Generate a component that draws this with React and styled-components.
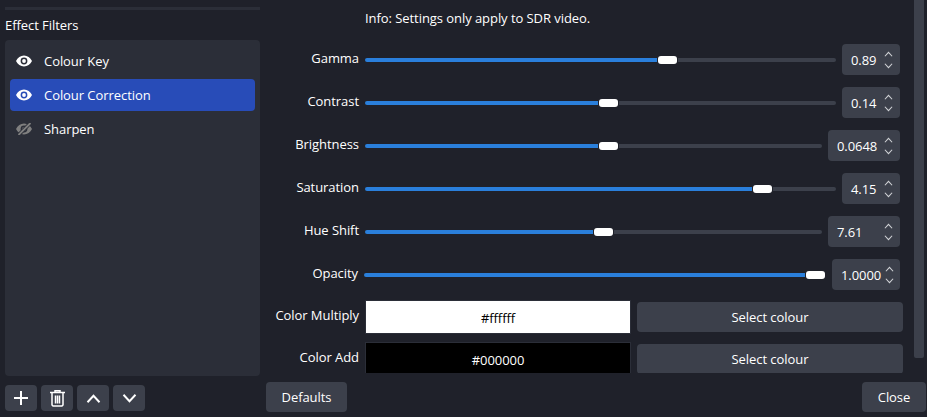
import styled, { createGlobalStyle } from 'styled-components';

const GlobalStyle = createGlobalStyle`
  html, body { margin: 0; padding: 0; background: #1f212a; }
  * { box-sizing: border-box; }
`;

const Page = styled.div`
  width: 927px;
  height: 417px;
  display: flex;
  overflow: hidden;
  background: #1f212a;
  color: #fff;
  font-family: "Open Sans", "Liberation Sans", sans-serif;
  font-size: 13px;
  letter-spacing: -0.06px;
`;

const LeftColumn = styled.div`
  width: 255px;
  margin-left: 5px;
  display: flex;
  flex-direction: column;
`;

const TopRule = styled.div`
  height: 3px;
  margin-top: 7px;
  background: #2b2e38;
`;

const GroupTitle = styled.div`
  height: 30px;
  line-height: 30px;
`;

const FilterList = styled.div`
  height: 336px;
  background: #2b2e38;
  border-radius: 4px;
  padding: 5px;
  display: flex;
  flex-direction: column;
  gap: 2px;
`;

const FilterRow = styled.div`
  height: 32px;
  display: flex;
  align-items: center;
  gap: 12px;
  padding-left: 6px;
  border-radius: 4px;
  background: ${p => (p.$selected ? '#284cb8' : 'transparent')};
`;

const ToolRow = styled.div`
  display: flex;
  gap: 4px;
  margin-top: 9px;
`;

const ToolButton = styled.div`
  width: 32px;
  height: 26px;
  border-radius: 4px;
  background: #3c404b;
  display: flex;
  align-items: center;
  justify-content: center;
`;

const RightColumn = styled.div`
  width: 660px;
  margin-left: 6px;
  display: flex;
  flex-direction: column;
`;

const ScrollArea = styled.div`
  height: 373px;
  flex-shrink: 0;
  overflow: hidden;
  display: flex;
`;

const Form = styled.div`
  width: 637px;
  flex-shrink: 0;
  display: flex;
  flex-direction: column;
`;

const InfoLine = styled.div`
  height: 44px;
  flex-shrink: 0;
  padding: 9px 0 0 99px;
  line-height: 18px;
`;

const Row = styled.div`
  height: 31px;
  flex-shrink: 0;
  margin-bottom: 12px;
  padding-right: 3px;
  display: flex;
  align-items: center;
`;

const Label = styled.div`
  width: 93px;
  text-align: right;
  margin-top: -3px;
  white-space: nowrap;
`;

const Slider = styled.div`
  flex: 1;
  margin-left: 6px;
  display: flex;
  align-items: center;
  gap: 1px;
`;

const Fill = styled.div`
  height: 4px;
  background: #2a7fdb;
  border-radius: 2px 0 0 2px;
`;

const Handle = styled.div`
  width: 19px;
  height: 8px;
  background: #fff;
  border-radius: 3px;
`;

const Rest = styled.div`
  flex: 1;
  height: 4px;
  background: #3c404b;
  border-radius: 0 2px 2px 0;
`;

const SpinBox = styled.div`
  width: ${p => p.$width}px;
  height: 31px;
  margin-left: 6px;
  padding: 0 3px 0 9px;
  background: #3c404b;
  border-radius: 4px;
  display: flex;
  align-items: center;
  justify-content: space-between;
`;

const Arrows = styled.div`
  width: 18px;
  height: 100%;
  display: flex;
  flex-direction: column;
  align-items: center;
  justify-content: center;
  gap: 6px;
`;

const ColourRow = styled.div`
  height: 34px;
  flex-shrink: 0;
  margin-bottom: 8px;
  display: flex;
  align-items: flex-start;

  &:nth-of-type(8) {
    margin-top: -2px;
  }
`;

const ColourLabel = styled(Label)`
  margin-top: 6px;
`;

const Swatch = styled.div`
  width: 266px;
  height: 34px;
  margin-left: 6px;
  flex-shrink: 0;
  border: 1px solid #2b2e38;
  background: ${p => p.$bg};
  color: ${p => p.$fg};
  display: flex;
  align-items: center;
  justify-content: center;
  padding-top: 2px;
`;

const SelectButton = styled.div`
  width: 266px;
  height: 30px;
  margin: 2px 0 0 6px;
  flex-shrink: 0;
  background: #3c404b;
  border-radius: 4px;
  display: flex;
  align-items: center;
  justify-content: center;
`;

const ScrollBar = styled.div`
  width: 10px;
  height: 358px;
  margin-left: 11px;
  flex-shrink: 0;
  background: #3c404b;
  border-radius: 0 0 2px 2px;
`;

const Footer = styled.div`
  margin-top: 9px;
  display: flex;
  justify-content: space-between;
`;

const FooterButton = styled.div`
  width: ${p => p.$width}px;
  height: 30px;
  background: #3c404b;
  border-radius: 4px;
  display: flex;
  align-items: center;
  justify-content: center;
`;

const Eye = ({ off }) => {
  const colour = off ? '#7f7f7f' : '#fff';
  return (
    <svg width="16" height="12" viewBox="0 0 16 12">
      <path
        fillRule="evenodd"
        fill={colour}
        d="M8 .6C4.600 .6 1.600 2.700 0 6c1.600 3.300 4.600 5.400 8 5.400s6.400-2.100 8-5.400C14.400 2.700 11.400 .6 8 .6zM8 2.600a3.400 3.400 0 1 1 0 6.800a3.400 3.400 0 0 1 0-6.800z"
      />
      <circle cx="8" cy="6" r="1.900" fill={colour} />
      {off && <path d="M2.500 12L14.500 0" stroke="#2b2e38" strokeWidth="3.600" />}
      {off && <path d="M2.500 12L14.500 0" stroke={colour} strokeWidth="1.800" />}
    </svg>
  );
};

const Chevron = ({ up, size = 9, color = '#d0d2d6', width = 1.2 }) => (
  <svg width={size} height={Math.ceil(size * 0.6)} viewBox="0 0 10 6">
    <path
      d={up ? 'M1 5.500L5 1.200L9 5.500' : 'M1 .5L5 4.800L9 .5'}
      fill="none"
      stroke={color}
      strokeWidth={width}
    />
  </svg>
);

const Plus = () => (
  <svg width="16" height="16" viewBox="0 0 16 16">
    <path d="M8 1V15M1 8H15" stroke="#fff" strokeWidth="2" />
  </svg>
);

const Trash = () => (
  <svg width="15" height="17" viewBox="0 0 15 17">
    <path d="M0 2.500H15M5 2.500V.8H10V2.500" fill="none" stroke="#fff" strokeWidth="1.500" />
    <path
      d="M2 3V15L3 16H12L13 15V3M5.500 5.500V13.500M7.500 5.500V13.500M9.500 5.500V13.500"
      fill="none"
      stroke="#fff"
      strokeWidth="1.500"
    />
  </svg>
);

const filters = [
  { name: 'Colour Key' },
  { name: 'Colour Correction', selected: true },
  { name: 'Sharpen', off: true },
];

const sliders = [
  { label: 'Gamma', fill: 292, value: '0.89', width: 58 },
  { label: 'Contrast', fill: 233, value: '0.14', width: 58 },
  { label: 'Brightness', fill: 233, value: '0.0648', width: 72 },
  { label: 'Saturation', fill: 387, value: '4.15', width: 58 },
  { label: 'Hue Shift', fill: 228, value: '7.61', width: 72 },
  { label: 'Opacity', fill: 441, value: '1.0000', width: 68 },
];

const App = () => (
  <Page>
    <GlobalStyle />
    <LeftColumn>
      <TopRule />
      <GroupTitle>Effect Filters</GroupTitle>
      <FilterList>
        {filters.map(f => (
          <FilterRow key={f.name} $selected={f.selected}>
            <Eye off={f.off} />
            <span>{f.name}</span>
          </FilterRow>
        ))}
      </FilterList>
      <ToolRow>
        <ToolButton><Plus /></ToolButton>
        <ToolButton><Trash /></ToolButton>
        <ToolButton><Chevron up size={15} color="#fff" width={1.3} /></ToolButton>
        <ToolButton><Chevron size={15} color="#fff" width={1.3} /></ToolButton>
      </ToolRow>
    </LeftColumn>
    <RightColumn>
      <ScrollArea>
        <Form>
          <InfoLine>Info: Settings only apply to SDR video.</InfoLine>
          {sliders.map(s => (
            <Row key={s.label}>
              <Label>{s.label}</Label>
              <Slider>
                <Fill style={{ width: s.fill }} />
                <Handle />
                <Rest />
              </Slider>
              <SpinBox $width={s.width}>
                <span>{s.value}</span>
                <Arrows>
                  <Chevron up />
                  <Chevron />
                </Arrows>
              </SpinBox>
            </Row>
          ))}
          <ColourRow>
            <ColourLabel>Color Multiply</ColourLabel>
            <Swatch $bg="#ffffff" $fg="#000">#ffffff</Swatch>
            <SelectButton>Select colour</SelectButton>
          </ColourRow>
          <ColourRow>
            <ColourLabel>Color Add</ColourLabel>
            <Swatch $bg="#000000" $fg="#fff">#000000</Swatch>
            <SelectButton>Select colour</SelectButton>
          </ColourRow>
        </Form>
        <ScrollBar />
      </ScrollArea>
      <Footer>
        <FooterButton $width={81}>Defaults</FooterButton>
        <FooterButton $width={64}>Close</FooterButton>
      </Footer>
    </RightColumn>
  </Page>
);

export default App;
